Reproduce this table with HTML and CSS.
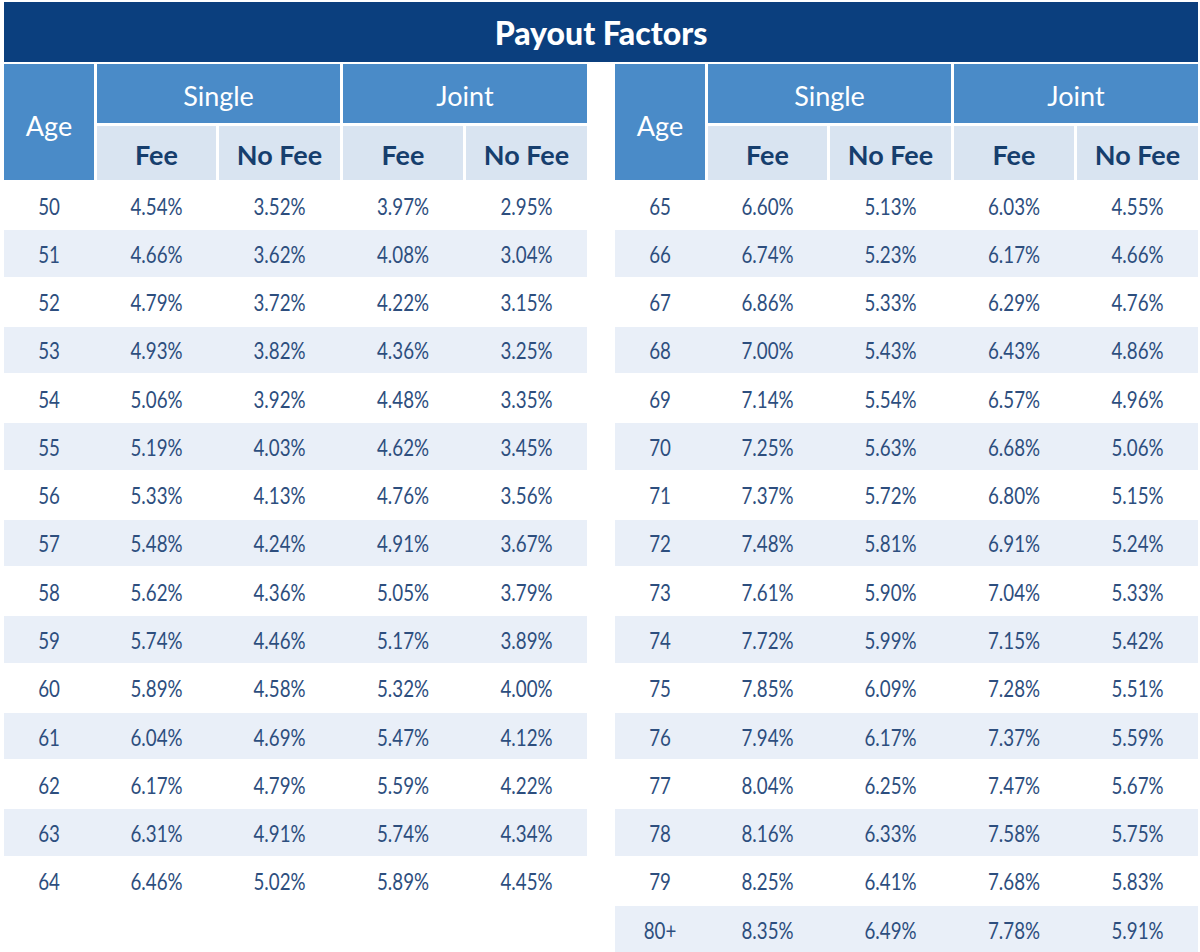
FILE: index.html
```html
<!DOCTYPE html>
<html lang="en">
<head>
<meta charset="utf-8">
<title>Payout Factors</title>
<link rel="stylesheet" href="styles.css">
</head>
<body>
<div class="sheet">
  <div class="title">Payout Factors</div>
  <div class="tables">
    <div class="tbl">
      <div class="head">
        <div class="h-age">Age</div>
        <div class="h-group">Single</div>
        <div class="h-group">Joint</div>
        <div class="h-sub">Fee</div>
        <div class="h-sub">No Fee</div>
        <div class="h-sub">Fee</div>
        <div class="h-sub">No Fee</div>
      </div>
      <div class="row"><span>50</span><span>4.54%</span><span>3.52%</span><span>3.97%</span><span>2.95%</span></div>
      <div class="row alt"><span>51</span><span>4.66%</span><span>3.62%</span><span>4.08%</span><span>3.04%</span></div>
      <div class="row"><span>52</span><span>4.79%</span><span>3.72%</span><span>4.22%</span><span>3.15%</span></div>
      <div class="row alt"><span>53</span><span>4.93%</span><span>3.82%</span><span>4.36%</span><span>3.25%</span></div>
      <div class="row"><span>54</span><span>5.06%</span><span>3.92%</span><span>4.48%</span><span>3.35%</span></div>
      <div class="row alt"><span>55</span><span>5.19%</span><span>4.03%</span><span>4.62%</span><span>3.45%</span></div>
      <div class="row"><span>56</span><span>5.33%</span><span>4.13%</span><span>4.76%</span><span>3.56%</span></div>
      <div class="row alt"><span>57</span><span>5.48%</span><span>4.24%</span><span>4.91%</span><span>3.67%</span></div>
      <div class="row"><span>58</span><span>5.62%</span><span>4.36%</span><span>5.05%</span><span>3.79%</span></div>
      <div class="row alt"><span>59</span><span>5.74%</span><span>4.46%</span><span>5.17%</span><span>3.89%</span></div>
      <div class="row"><span>60</span><span>5.89%</span><span>4.58%</span><span>5.32%</span><span>4.00%</span></div>
      <div class="row alt"><span>61</span><span>6.04%</span><span>4.69%</span><span>5.47%</span><span>4.12%</span></div>
      <div class="row"><span>62</span><span>6.17%</span><span>4.79%</span><span>5.59%</span><span>4.22%</span></div>
      <div class="row alt"><span>63</span><span>6.31%</span><span>4.91%</span><span>5.74%</span><span>4.34%</span></div>
      <div class="row"><span>64</span><span>6.46%</span><span>5.02%</span><span>5.89%</span><span>4.45%</span></div>
    </div>
    <div class="tbl">
      <div class="head">
        <div class="h-age">Age</div>
        <div class="h-group">Single</div>
        <div class="h-group">Joint</div>
        <div class="h-sub">Fee</div>
        <div class="h-sub">No Fee</div>
        <div class="h-sub">Fee</div>
        <div class="h-sub">No Fee</div>
      </div>
      <div class="row"><span>65</span><span>6.60%</span><span>5.13%</span><span>6.03%</span><span>4.55%</span></div>
      <div class="row alt"><span>66</span><span>6.74%</span><span>5.23%</span><span>6.17%</span><span>4.66%</span></div>
      <div class="row"><span>67</span><span>6.86%</span><span>5.33%</span><span>6.29%</span><span>4.76%</span></div>
      <div class="row alt"><span>68</span><span>7.00%</span><span>5.43%</span><span>6.43%</span><span>4.86%</span></div>
      <div class="row"><span>69</span><span>7.14%</span><span>5.54%</span><span>6.57%</span><span>4.96%</span></div>
      <div class="row alt"><span>70</span><span>7.25%</span><span>5.63%</span><span>6.68%</span><span>5.06%</span></div>
      <div class="row"><span>71</span><span>7.37%</span><span>5.72%</span><span>6.80%</span><span>5.15%</span></div>
      <div class="row alt"><span>72</span><span>7.48%</span><span>5.81%</span><span>6.91%</span><span>5.24%</span></div>
      <div class="row"><span>73</span><span>7.61%</span><span>5.90%</span><span>7.04%</span><span>5.33%</span></div>
      <div class="row alt"><span>74</span><span>7.72%</span><span>5.99%</span><span>7.15%</span><span>5.42%</span></div>
      <div class="row"><span>75</span><span>7.85%</span><span>6.09%</span><span>7.28%</span><span>5.51%</span></div>
      <div class="row alt"><span>76</span><span>7.94%</span><span>6.17%</span><span>7.37%</span><span>5.59%</span></div>
      <div class="row"><span>77</span><span>8.04%</span><span>6.25%</span><span>7.47%</span><span>5.67%</span></div>
      <div class="row alt"><span>78</span><span>8.16%</span><span>6.33%</span><span>7.58%</span><span>5.75%</span></div>
      <div class="row"><span>79</span><span>8.25%</span><span>6.41%</span><span>7.68%</span><span>5.83%</span></div>
      <div class="row alt"><span>80+</span><span>8.35%</span><span>6.49%</span><span>7.78%</span><span>5.91%</span></div>
    </div>
  </div>
</div>
</body>
</html>
```

FILE: styles.css
```css
html, body {
  margin: 0;
  padding: 0;
  background: #ffffff;
}

.sheet {
  width: 1194px;
  padding: 2px 2px 0 4px;
  height: 950px;
  overflow: hidden;
}

.title {
  height: 60px;
  background: #0b3f7e;
  color: #ffffff;
  font-family: Lato, "Open Sans", sans-serif;
  font-weight: 900;
  font-size: 32px;
  line-height: 62px;
  text-align: center;
}

.tables {
  display: flex;
  gap: 28px;
  margin-top: 2px;
}

.tbl {
  width: 583px;
}

.head {
  display: grid;
  grid-template-columns: 90px 119px 121px 120px 121px;
  grid-template-rows: 59px 54px;
  gap: 3px;
  font-family: Lato, "Open Sans", sans-serif;
  font-size: 27px;
}

.h-age {
  grid-row: 1 / span 2;
  grid-column: 1;
  background: #4a8bc8;
  color: #ffffff;
  display: flex;
  align-items: center;
  justify-content: center;
  padding-top: 6px;
}

.h-group {
  grid-column: span 2;
  background: #4a8bc8;
  color: #ffffff;
  display: flex;
  align-items: center;
  justify-content: center;
  padding-top: 3px;
}

.h-sub {
  background: #d9e4f1;
  color: #163e6d;
  font-weight: 700;
  display: flex;
  align-items: center;
  justify-content: center;
  padding-top: 2px;
}

.row {
  display: grid;
  grid-template-columns: 90px 119px 121px 120px 121px;
  column-gap: 3px;
  height: 48.27px;
  box-sizing: border-box;
  border-top: 2px solid #ffffff;
  font-family: Lato, "Open Sans", sans-serif;
  font-size: 24px;
  color: #2d4e7e;
}

.row.alt {
  background: #e9eff8;
}

.row span {
  display: flex;
  align-items: center;
  justify-content: center;
  padding-top: 0;
  transform: scaleX(0.78);
}
```
